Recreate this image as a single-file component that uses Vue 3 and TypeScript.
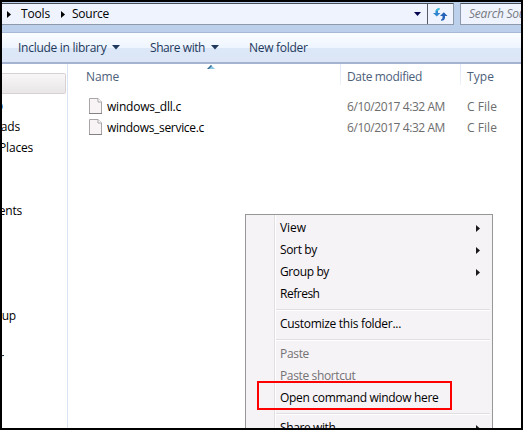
<script setup lang="ts">
interface MenuEntry { label?: string; width?: number; arrow?: boolean; disabled?: boolean; marked?: boolean }

const navRows = [
  { text: 'p', end: 1 }, { text: 'ads', end: 18 }, { text: 'Places', end: 31 }, { text: '', end: 0 },
  { text: '', end: 0 }, { text: 'ents', end: 20 }, { text: '', end: 0 }, { text: '', end: 0 },
  { text: '', end: 0 }, { text: '', end: 0 }, { text: 'up', end: 14 }, { text: '', end: 0 }, { text: 'r', end: 2 },
]

const files = [
  { name: 'windows_dll.c', width: 74 },
  { name: 'windows_service.c', width: 97 },
]

const menu: MenuEntry[] = [
  { label: 'View', width: 26, arrow: true },
  { label: 'Sort by', width: 37, arrow: true },
  { label: 'Group by', width: 49, arrow: true },
  { label: 'Refresh', width: 39.5 },
  {},
  { label: 'Customize this folder...', width: 121 },
  {},
  { label: 'Paste', width: 29, disabled: true },
  { label: 'Paste shortcut', width: 75.5, disabled: true },
  { label: 'Open command window here', width: 158.5, marked: true },
  {},
  { label: 'Share with', width: 55.5, arrow: true },
]

/* Spreads a label's letters so that it takes up the given width in pixels. */
const vFit = {
  mounted(el: HTMLElement, binding: { value: number }) {
    const count = (el.textContent ?? '').length
    const natural = el.getBoundingClientRect().width
    el.style.letterSpacing = `${((binding.value - natural) / count).toFixed(3)}px`
  },
}
</script>

<template>
  <div class="window">
    <header class="address-row">
      <div class="address">
        <svg class="crumb" width="4" height="7" viewBox="0 0 4 7"><path d="M0 0L4 3.5L0 7Z" /></svg>
        <span v-fit="29" class="tools">Tools</span>
        <svg class="crumb" width="4" height="7" viewBox="0 0 4 7"><path d="M0 0L4 3.5L0 7Z" /></svg>
        <span v-fit="37" class="source">Source</span>
        <svg class="drop" width="7" height="4" viewBox="0 0 7 4"><path d="M0 0H7L3.5 4Z" /></svg>
        <div class="refresh">
          <svg width="15" height="13" viewBox="0 0 15 13">
            <path d="M6.5 .2C4 .2 2.5 1.5 2.5 3.5V5H0L3.8 8.5L7.5 5H5V3.5C5 2.3 5.5 1.8 6.5 1.6Z" fill="#2f86cf" />
            <path d="M6.5 .2C4.5 .2 3 1.2 2.6 2.8L5 3C5.2 2.2 5.6 1.8 6.5 1.6Z" fill="#35bfd8" />
            <path d="M8 12.8C10.7 12.8 12 11.5 12 9.5V8H14.5L10.8 4.3L7 8H9.5V9.5C9.5 10.7 9 11.2 8 11.4Z" fill="#2461b8" />
          </svg>
        </div>
      </div>
      <div class="search"><span v-fit="72">Search Source</span></div>
    </header>

    <nav class="toolbar">
      <span v-fit="88.5" class="include">Include in library</span>
      <svg class="caret" width="8" height="5" viewBox="0 0 8 5"><path d="M0 0H8L4 4.5Z" /></svg>
      <span v-fit="55" class="share">Share with</span>
      <svg class="caret" width="8" height="5" viewBox="0 0 8 5"><path d="M0 0H8L4 4.5Z" /></svg>
      <span v-fit="58.5" class="new">New folder</span>
    </nav>

    <main class="content">
      <aside class="side">
        <div class="selected"></div>
        <div v-for="(row, i) in navRows" :key="i" class="nav-row" :style="{ width: row.end + 'px' }">{{ row.text }}</div>
      </aside>
      <section class="list">
        <div class="head">
          <div class="c-name"><span v-fit="33">Name</span>
            <svg class="sort" width="8" height="4" viewBox="0 0 8 4"><path d="M4 0L8 4H0Z" fill="#8cc8e5" /><path d="M4 0L0 4H2L5 1Z" fill="#3c6d91" /></svg>
          </div>
          <div class="c-date"><span v-fit="75">Date modified</span></div>
          <div class="c-type"><span v-fit="27">Type</span></div>
        </div>
        <div v-for="file in files" :key="file.name" class="file">
          <div class="f-name">
            <svg width="13" height="16" viewBox="0 0 13 16">
              <path d="M.5 .5H9L12.5 4V15.5H.5Z" fill="#f8f4f5" stroke="#aaa6a7" />
              <path d="M9 .5V4H12.5" fill="#fff" stroke="#aaa6a7" />
              <path d="M0 15.5H13" stroke="#858283" />
            </svg>
            <span v-fit="file.width">{{ file.name }}</span>
          </div>
          <div class="f-date"><span v-fit="98">6/10/2017 4:32 AM</span></div>
          <div class="f-type"><span v-fit="30">C File</span></div>
        </div>
      </section>
    </main>

    <div class="menu">
      <template v-for="(item, i) in menu" :key="i">
        <div v-if="item.label" class="item" :class="{ disabled: item.disabled }">
          <span v-fit="item.width">{{ item.label }}</span>
          <svg v-if="item.arrow" width="4" height="7" viewBox="0 0 4 7"><path d="M0 0L4 3.5L0 7Z" /></svg>
          <i v-if="item.marked" class="mark"></i>
        </div>
        <div v-else class="rule"></div>
      </template>
    </div>
  </div>
</template>

<style>
body { margin: 0; background: #fff; overflow: hidden; }
</style>

<style scoped>
.window {
  box-sizing: border-box; position: relative; width: 523px; height: 430px; overflow: hidden;
  border: 2px solid #000; background: #fff; color: #000;
  font: 12px/20px "Open Sans", "Noto Sans", sans-serif; white-space: nowrap;
  display: flex; flex-direction: column;
}
span { display: inline-block; flex: none; }
svg { display: block; flex: none; }
.address-row {
  box-sizing: border-box; height: 31px; flex: none; display: flex; gap: 6px; padding-top: 1px;
  background: #bcd0ec; border-bottom: 1px solid #a6bad8;
}
.address {
  box-sizing: border-box; width: 452px; height: 22px; flex: none; display: flex; align-items: center; padding-left: 5px;
  border: 1px solid #8e99aa; border-top-color: #484e59; border-left: 0; background: #eef3fe;
}
.tools { margin-left: 10px; }
.tools + .crumb { margin-left: 11px; }
.source { margin-left: 7px; }
.drop { margin-left: auto; fill: #050553; }
.refresh {
  box-sizing: border-box; width: 26px; height: 20px; margin-left: 6px; display: flex; align-items: center;
  justify-content: center; border-left: 1px solid #555b65;
}
.search {
  box-sizing: border-box; width: 80px; height: 22px; flex: none; padding-left: 8px; background: #eef3fe;
  border: 1px solid #8e99aa; border-top-color: #484e59; font-style: italic; color: #77797e; line-height: 19px;
}
.toolbar {
  box-sizing: border-box; height: 31px; flex: none; display: flex; align-items: center; padding-left: 16px;
  background: linear-gradient(#fbfdff 0, #eef5ff 15px, #dce7f7 15px, #dce6f6 100%);
  border-bottom: 2px solid #a4b3d0; color: #1e395b;
}
.share, .new { margin-left: 30px; }
.caret { margin-left: 5.5px; fill: #1e395b; }
.share + .caret { margin-left: 6px; }
.content { flex: 1; min-height: 0; display: flex; }
.side { box-sizing: border-box; width: 66px; padding-top: 9px; border-right: 1px solid #d9e5f4; overflow: hidden; }
.selected {
  box-sizing: border-box; width: 64px; height: 21px; margin-bottom: 1px; border: 1px solid #d8d1d3; border-left: 0;
  border-radius: 0 2px 2px 0; background: linear-gradient(#f8f6f6, #e8e6e7);
}
.nav-row { height: 21px; line-height: 21px; display: flex; justify-content: flex-end; overflow: hidden; letter-spacing: -.2px; }
.list { flex: 1; min-width: 0; }
.head { display: grid; grid-template-columns: 272px 120px 61px; height: 32px; color: #4c607a; line-height: 26px; }
.c-name { display: flex; padding-left: 18px; }
.sort { margin: 1px 0 0 88px; }
.c-date, .c-type {
  height: 21px; padding-left: 6px;
  border-left: 1px solid; border-image: linear-gradient(#dce8f7, #eef3fa) 1;
}
.file { display: grid; grid-template-columns: 272px 120px 61px; height: 21px; line-height: 21px; }
.f-name { display: flex; align-items: center; gap: 5px; padding-left: 21px; }
.f-name svg { margin-top: -1px; }
.f-date, .f-type { padding-left: 7px; color: #6d6d6d; }
.menu {
  box-sizing: border-box; position: absolute; left: 243px; top: 212px; width: 248px; padding: 2px;
  border: 1px solid #979797; background: linear-gradient(90deg, transparent 28px, #e2dfe2 28px, #e2dfe2 29px, #fff 29px, #fff 30px, transparent 30px) #f6f3f7;
}
.item {
  position: relative; height: 22px; line-height: 22px; display: flex; align-items: center;
  justify-content: space-between; padding: 0 12px 0 32px;
}
.item svg { fill: #1b1a1b; margin-right: -2px; }
.disabled { color: #747274; }
.rule { height: 1px; margin: 4px 0 2px 28px; border-bottom: 1px solid #fff; background: #e1dee1; }
.mark { position: absolute; box-sizing: border-box; left: 9px; top: -6px; width: 195px; height: 29px; border: 2px solid #f00; }
</style>
